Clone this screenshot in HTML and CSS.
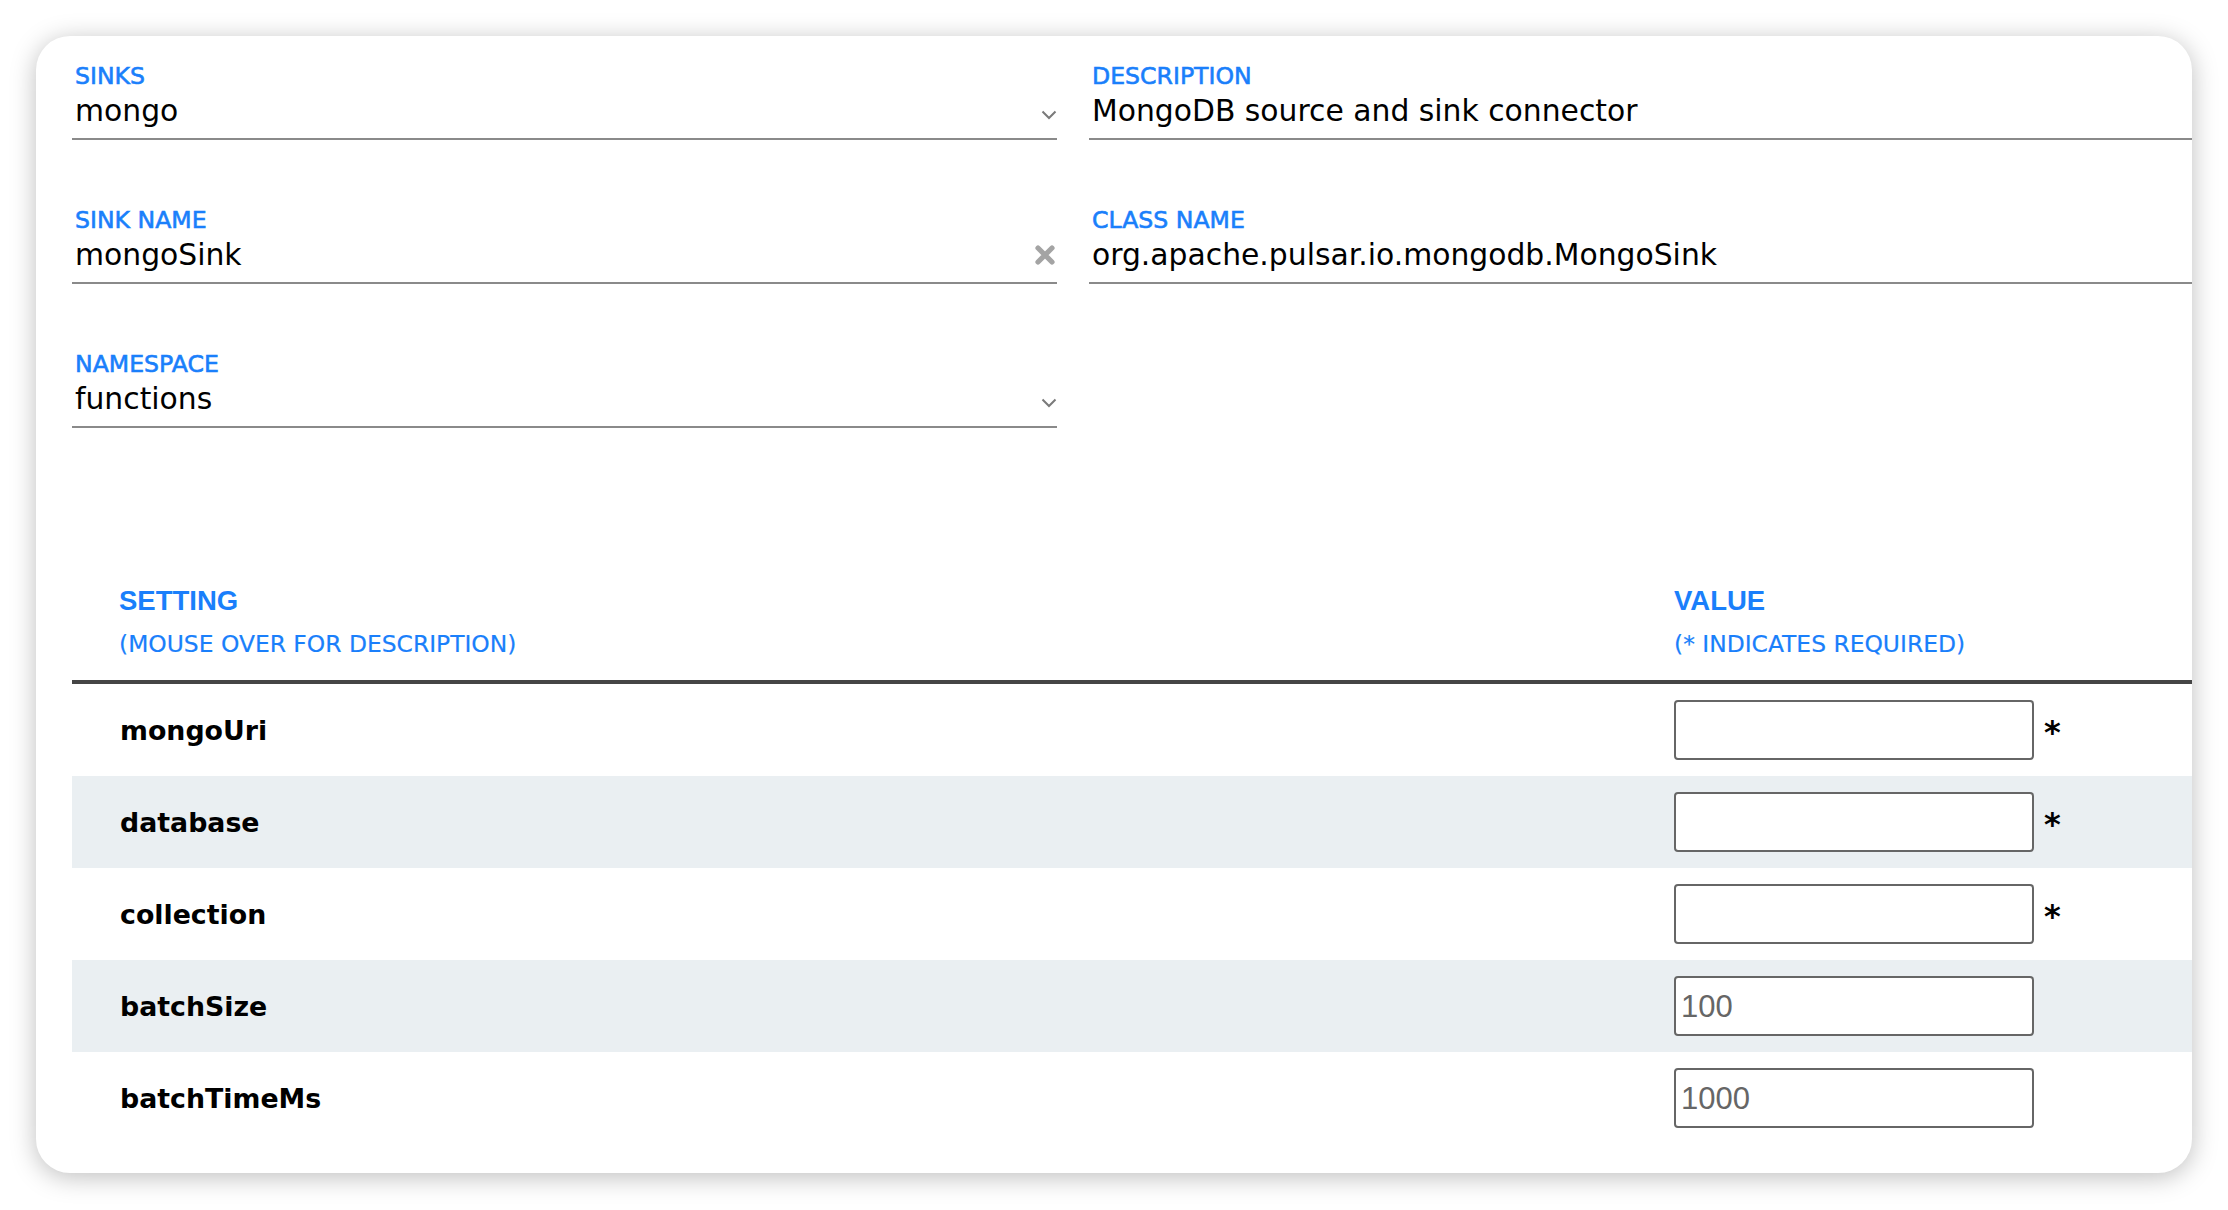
FILE: index.html
```html
<!DOCTYPE html>
<html lang="en">
<head>
<meta charset="utf-8">
<title>Sink config</title>
<link rel="stylesheet" href="styles.css">
</head>
<body>
<div class="card">
  <div class="fields">
    <div class="field">
      <div class="label">SINKS</div>
      <div class="value-row">
        <span class="value">mongo</span>
        <svg class="chev" width="16" height="10" viewBox="0 0 16 10"><polyline points="1.5,1.5 8,8 14.5,1.5" fill="none" stroke="#7a7a7a" stroke-width="2"/></svg>
      </div>
    </div>
    <div class="field">
      <div class="label">DESCRIPTION</div>
      <div class="value-row">
        <span class="value">MongoDB source and sink connector</span>
      </div>
    </div>
    <div class="field">
      <div class="label">SINK NAME</div>
      <div class="value-row">
        <span class="value">mongoSink</span>
        <svg class="clear" width="22" height="22" viewBox="0 0 22 22"><path d="M4 4 L18 18 M18 4 L4 18" fill="none" stroke="#a4a4a4" stroke-width="5.2" stroke-linecap="round"/></svg>
      </div>
    </div>
    <div class="field">
      <div class="label">CLASS NAME</div>
      <div class="value-row">
        <span class="value">org.apache.pulsar.io.mongodb.MongoSink</span>
      </div>
    </div>
    <div class="field">
      <div class="label">NAMESPACE</div>
      <div class="value-row">
        <span class="value">functions</span>
        <svg class="chev" width="16" height="10" viewBox="0 0 16 10"><polyline points="1.5,1.5 8,8 14.5,1.5" fill="none" stroke="#7a7a7a" stroke-width="2"/></svg>
      </div>
    </div>
  </div>

  <div class="settings">
    <div class="thead">
      <div class="th">
        <div class="th-title">SETTING</div>
        <div class="th-sub">(MOUSE OVER FOR DESCRIPTION)</div>
      </div>
      <div class="th">
        <div class="th-title">VALUE</div>
        <div class="th-sub">(* INDICATES REQUIRED)</div>
      </div>
    </div>
    <div class="row">
      <div class="name">mongoUri</div>
      <div class="cell"><input class="inp" type="text" value=""><span class="req">*</span></div>
    </div>
    <div class="row alt">
      <div class="name">database</div>
      <div class="cell"><input class="inp" type="text" value=""><span class="req">*</span></div>
    </div>
    <div class="row">
      <div class="name">collection</div>
      <div class="cell"><input class="inp" type="text" value=""><span class="req">*</span></div>
    </div>
    <div class="row alt">
      <div class="name">batchSize</div>
      <div class="cell"><input class="inp" type="text" placeholder="100"></div>
    </div>
    <div class="row">
      <div class="name">batchTimeMs</div>
      <div class="cell"><input class="inp" type="text" placeholder="1000"></div>
    </div>
  </div>
</div>
</body>
</html>
```

FILE: styles.css
```css
* { box-sizing: border-box; }

html, body {
  margin: 0;
  padding: 0;
  background: #ffffff;
}

body {
  font-family: "DejaVu Sans", sans-serif;
  color: #000;
  padding: 36px;
}

.card {
  width: 2156px;
  height: 1137px;
  background: #fff;
  border-radius: 34px;
  box-shadow: 0 4px 26px rgba(0, 0, 0, 0.26);
  overflow: hidden;
  padding: 26px 0 29px 36px;
}

.fields {
  display: grid;
  grid-template-columns: 985px 1fr;
  column-gap: 32px;
  row-gap: 66px;
}

.field {
  border-bottom: 2px solid #8a8a8a;
  padding-bottom: 9px;
}

.label {
  color: #1a7ffb;
  font-size: 23.6px;
  line-height: 28px;
  margin-bottom: 3px;
  padding-left: 3px;
  -webkit-text-stroke: 0.6px #1a7ffb;
}

.value-row {
  display: flex;
  align-items: center;
  justify-content: space-between;
  height: 36px;
  padding-left: 3px;
}

.value {
  font-size: 29.8px;
  line-height: 36px;
  white-space: nowrap;
}

.chev {
  display: block;
  margin-top: 7px;
}

.clear {
  display: block;
  margin-right: 1px;
}

.settings {
  margin-top: 157px;
}

.thead {
  display: grid;
  grid-template-columns: 1602px 1fr;
  border-bottom: 4px solid #454545;
  padding-bottom: 22px;
}

.th:first-child {
  padding-left: 47px;
}

.th-title {
  font-family: "Liberation Sans", Arial, sans-serif;
  font-weight: bold;
  font-size: 27.5px;
  line-height: 32px;
  color: #1a7ffb;
  margin-bottom: 13px;
}

.th-sub {
  font-size: 23.4px;
  line-height: 28px;
  color: #1a7ffb;
  -webkit-text-stroke: 0.2px #1a7ffb;
}

.row {
  display: grid;
  grid-template-columns: 1602px 1fr;
  align-items: center;
  height: 92px;
}

.row.alt {
  background: #eaeff2;
}

.name {
  padding-left: 48px;
  font-weight: bold;
  font-size: 26.8px;
}

.cell {
  display: flex;
  align-items: center;
  gap: 10px;
}

.inp {
  width: 360px;
  height: 60px;
  border: 2px solid #666;
  border-radius: 4px;
  background: #fff;
  padding: 2px 5px 0;
  font-family: "Liberation Sans", Arial, sans-serif;
  font-size: 31px;
  color: #666;
  outline: none;
  margin: 0;
}

.inp::placeholder {
  color: #666;
  opacity: 1;
}

.req {
  font-weight: bold;
  font-size: 32px;
  line-height: 1;
  margin-top: 3px;
}
```
